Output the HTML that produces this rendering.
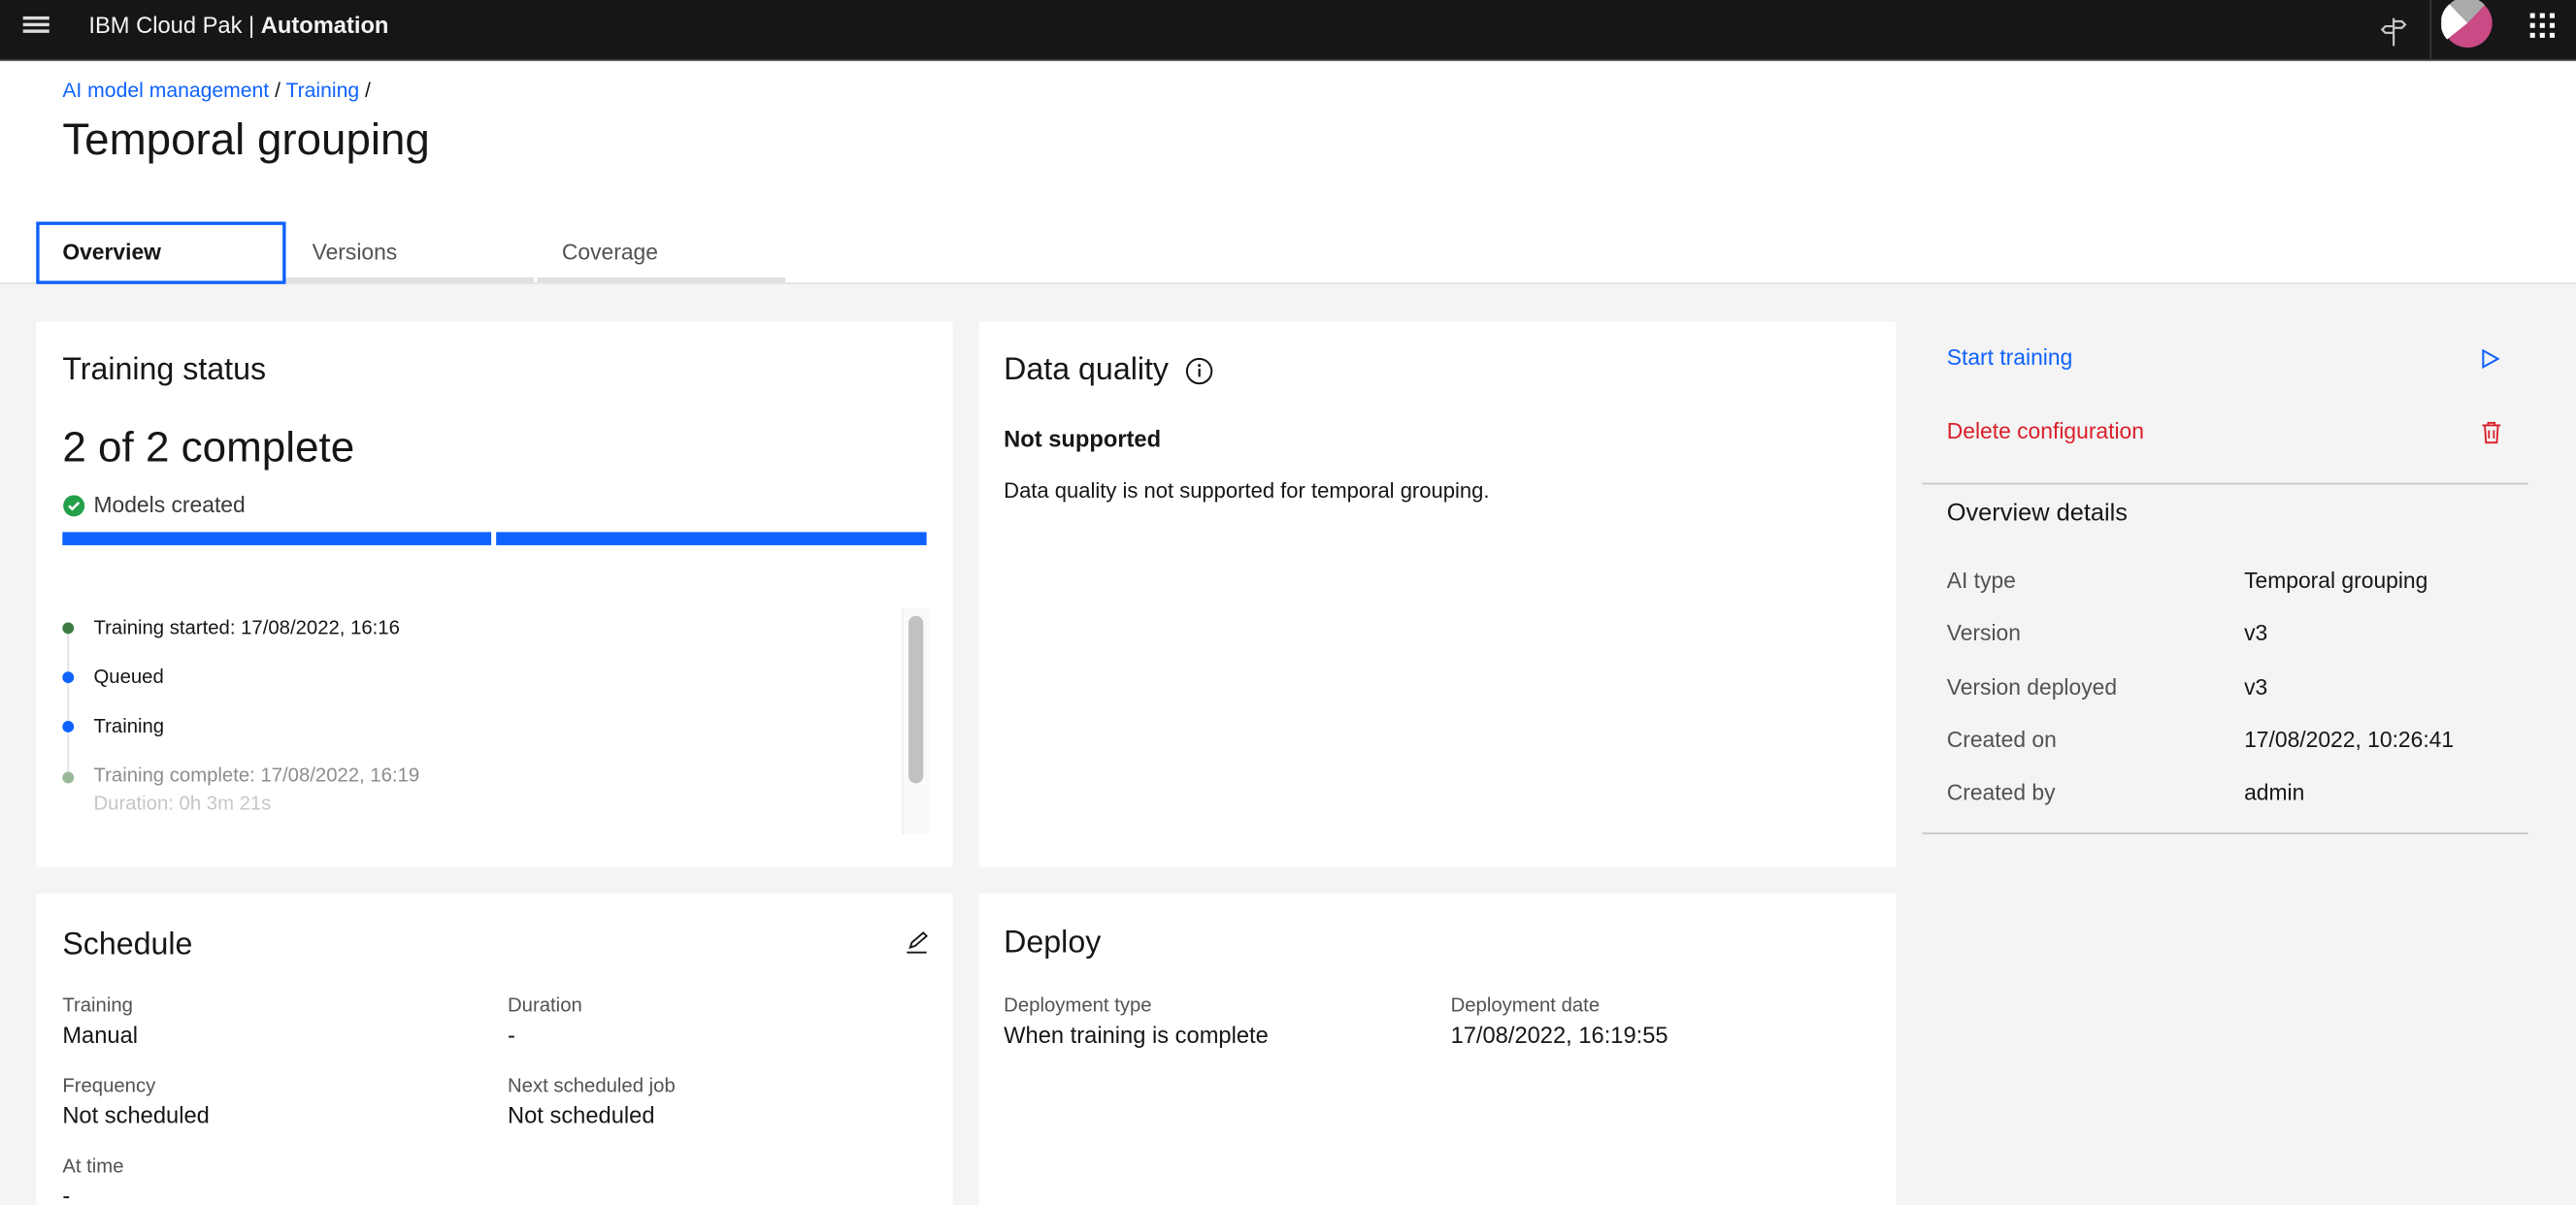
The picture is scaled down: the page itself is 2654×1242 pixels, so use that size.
<!DOCTYPE html>
<html><head><meta charset="utf-8"><style>
*{box-sizing:border-box;margin:0;padding:0}
html,body{width:2654px;height:1242px;overflow:hidden;background:#f4f4f4}
#w{width:1568px;height:734px;transform:scale(1.69260);transform-origin:0 0;position:relative;font-family:"Liberation Sans",sans-serif;color:#161616;background:#f4f4f4;overflow:hidden}
.a{position:absolute;white-space:nowrap}
.card{position:absolute;background:#fff}
.blue{color:#0f62fe}
.lbl{font-size:12px;color:#525252}
.val{font-size:14px;color:#161616}
</style></head><body><div id="w">
<div class="a" style="left:0;top:0;width:1568px;height:37px;background:#161616;border-bottom:1px solid #393939"></div>
<div class="a" style="left:14px;top:10px;width:16px;height:2px;background:#ddd;box-shadow:0 4px 0 #ddd,0 8px 0 #ddd"></div>
<div class="a" style="left:54px;top:7px;font-size:14px;color:#f4f4f4">IBM Cloud Pak | <b>Automation</b></div>
<svg class="a" style="left:1447px;top:8px" width="20" height="22" viewBox="0 0 20 22"><path d="M10 3v17M10 5h5l2 2-2 2h-5M10 8H5l-2 2 2 2h5" fill="none" stroke="#c6c6c6" stroke-width="1.3"/></svg>
<div class="a" style="left:1479px;top:0;width:1px;height:37px;background:#393939"></div>
<svg class="a" style="left:1486px;top:0" width="32" height="30" viewBox="0 0 32 30"><circle cx="16" cy="14" r="15" fill="#c94a84"/><path d="M16 14L3.5 24A15 15 0 0 1 5 2.5Z" fill="#fff"/><path d="M16 14L5 2.5A15 15 0 0 1 26.5 3Z" fill="#aaa"/></svg>
<svg class="a" style="left:1540px;top:8px" width="16" height="16"><g fill="#fff"><rect x="0" y="0" width="3" height="3"/><rect x="6" y="0" width="3" height="3"/><rect x="12" y="0" width="3" height="3"/><rect x="0" y="6" width="3" height="3"/><rect x="6" y="6" width="3" height="3"/><rect x="12" y="6" width="3" height="3"/><rect x="0" y="12" width="3" height="3"/><rect x="6" y="12" width="3" height="3"/><rect x="12" y="12" width="3" height="3"/></g></svg>

<div class="a" style="left:0;top:38px;width:1568px;height:135px;background:#fff;border-bottom:1px solid #e0e0e0"></div>
<div class="a" style="left:38px;top:48px;font-size:12.5px"><span class="blue">AI model management</span> / <span class="blue">Training</span> /</div>
<div class="a" style="left:38px;top:70px;font-size:27px;font-weight:300">Temporal grouping</div>
<div class="a" style="left:174px;top:169px;width:151px;height:3px;background:#e0e0e0"></div>
<div class="a" style="left:327px;top:169px;width:151px;height:3px;background:#e0e0e0"></div>
<div class="a" style="left:22px;top:135px;width:152px;height:38px;border:2px solid #0f62fe;background:#fff"></div>
<div class="a" style="left:38px;top:146px;font-size:13.5px;font-weight:bold">Overview</div>
<div class="a" style="left:190px;top:146px;font-size:13.5px;color:#525252">Versions</div>
<div class="a" style="left:342px;top:146px;font-size:13.5px;color:#525252">Coverage</div>

<div class="card" style="left:22px;top:196px;width:558px;height:332px"></div>
<div class="a" style="left:38px;top:215px;font-size:19px">Training status</div>
<div class="a" style="left:38px;top:257px;font-size:26px;font-weight:300">2 of 2 complete</div>
<svg class="a" style="left:38px;top:301px" width="14" height="14"><circle cx="7" cy="7" r="6.5" fill="#24a148"/><path d="M4 7l2 2 4-4" fill="none" stroke="#fff" stroke-width="1.5"/></svg>
<div class="a" style="left:57px;top:300px;font-size:13.5px;color:#393939">Models created</div>
<div class="a" style="left:38px;top:324px;width:261px;height:8px;background:#0f62fe"></div>
<div class="a" style="left:302px;top:324px;width:262px;height:8px;background:#0f62fe"></div>
<div class="a" style="left:41px;top:386px;width:1px;height:90px;background:#e0e0e0"></div>
<div class="a" style="left:38px;top:379px;width:7px;height:7px;border-radius:50%;background:#3e7d42"></div>
<div class="a" style="left:38px;top:409px;width:7px;height:7px;border-radius:50%;background:#0f62fe"></div>
<div class="a" style="left:38px;top:439px;width:7px;height:7px;border-radius:50%;background:#0f62fe"></div>
<div class="a" style="left:38px;top:470px;width:7px;height:7px;border-radius:50%;background:#98b898"></div>
<div class="a" style="left:57px;top:375px;font-size:12px">Training started: 17/08/2022, 16:16</div>
<div class="a" style="left:57px;top:405px;font-size:12px">Queued</div>
<div class="a" style="left:57px;top:435px;font-size:12px">Training</div>
<div class="a" style="left:57px;top:465px;font-size:12px;color:#8d8d8d">Training complete: 17/08/2022, 16:19</div>
<div class="a" style="left:57px;top:482px;font-size:12px;color:#c6c6c6">Duration: 0h 3m 21s</div>
<div class="a" style="left:549px;top:370px;width:17px;height:138px;background:#fafafa;border-left:1px solid #eee"></div>
<div class="a" style="left:553px;top:375px;width:9px;height:102px;border-radius:5px;background:#c1c1c1"></div>

<div class="card" style="left:596px;top:196px;width:558px;height:332px"></div>
<div class="a" style="left:611px;top:215px;font-size:19px">Data quality</div>
<svg class="a" style="left:721px;top:217px" width="18" height="18"><circle cx="9" cy="9" r="7.5" fill="none" stroke="#161616" stroke-width="1.2"/><rect x="8.4" y="7.5" width="1.3" height="5" fill="#161616"/><circle cx="9" cy="5.5" r="0.9" fill="#161616"/></svg>
<div class="a" style="left:611px;top:259px;font-size:14px;font-weight:bold">Not supported</div>
<div class="a" style="left:611px;top:291px;font-size:13px">Data quality is not supported for temporal grouping.</div>

<div class="card" style="left:22px;top:544px;width:558px;height:200px"></div>
<div class="a" style="left:38px;top:565px;font-size:19px">Schedule</div>
<svg class="a" style="left:550px;top:566px" width="16" height="16"><path d="M2 14h12M4 11l1-3 7-6 2 2-7 6z" fill="none" stroke="#161616" stroke-width="1.1"/></svg>
<div class="a lbl" style="left:38px;top:605px">Training</div><div class="a val" style="left:38px;top:622px">Manual</div>
<div class="a lbl" style="left:309px;top:605px">Duration</div><div class="a val" style="left:309px;top:622px">-</div>
<div class="a lbl" style="left:38px;top:654px">Frequency</div><div class="a val" style="left:38px;top:671px">Not scheduled</div>
<div class="a lbl" style="left:309px;top:654px">Next scheduled job</div><div class="a val" style="left:309px;top:671px">Not scheduled</div>
<div class="a lbl" style="left:38px;top:703px">At time</div><div class="a val" style="left:38px;top:720px">-</div>

<div class="card" style="left:596px;top:544px;width:558px;height:200px"></div>
<div class="a" style="left:611px;top:564px;font-size:19px">Deploy</div>
<div class="a lbl" style="left:611px;top:605px">Deployment type</div><div class="a val" style="left:611px;top:622px">When training is complete</div>
<div class="a lbl" style="left:883px;top:605px">Deployment date</div><div class="a val" style="left:883px;top:622px">17/08/2022, 16:19:55</div>

<div class="a blue" style="left:1185px;top:210px;font-size:13.5px">Start training</div>
<svg class="a" style="left:1510px;top:212px" width="12" height="13"><path d="M1.5 1.5v10l9-5z" fill="none" stroke="#0f62fe" stroke-width="1.2"/></svg>
<div class="a" style="left:1185px;top:255px;font-size:13.5px;color:#da1e28">Delete configuration</div>
<svg class="a" style="left:1510px;top:256px" width="13" height="15"><path d="M1 3h11M4.5 3V1.5h4V3M2.5 3l.7 10.5h6.6L10.5 3M5 6v5M8 6v5" fill="none" stroke="#da1e28" stroke-width="1.1"/></svg>
<div class="a" style="left:1170px;top:294px;width:369px;height:1px;background:#c6c6c6"></div>
<div class="a" style="left:1185px;top:304px;font-size:15px">Overview details</div>
<div class="a" style="left:1185px;top:346px;font-size:13.5px;color:#525252">AI type</div><div class="a val" style="left:1366px;top:346px;font-size:13.5px">Temporal grouping</div>
<div class="a" style="left:1185px;top:378px;font-size:13.5px;color:#525252">Version</div><div class="a val" style="left:1366px;top:378px;font-size:13.5px">v3</div>
<div class="a" style="left:1185px;top:411px;font-size:13.5px;color:#525252">Version deployed</div><div class="a val" style="left:1366px;top:411px;font-size:13.5px">v3</div>
<div class="a" style="left:1185px;top:443px;font-size:13.5px;color:#525252">Created on</div><div class="a val" style="left:1366px;top:443px;font-size:13.5px">17/08/2022, 10:26:41</div>
<div class="a" style="left:1185px;top:475px;font-size:13.5px;color:#525252">Created by</div><div class="a val" style="left:1366px;top:475px;font-size:13.5px">admin</div>
<div class="a" style="left:1170px;top:507px;width:369px;height:1px;background:#c6c6c6"></div>
</div></body></html>
